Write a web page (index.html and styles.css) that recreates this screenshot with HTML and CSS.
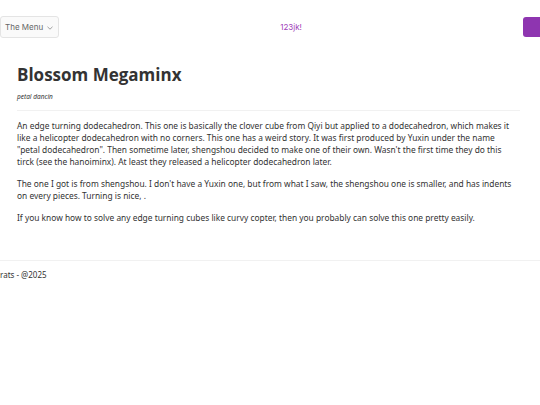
FILE: index.html
```html
<!DOCTYPE html>
<html>
<head>
<meta charset="utf-8">
<link rel="stylesheet" href="styles.css">
</head>
<body>
<header class="topbar">
  <button class="menu-btn">The Menu <svg class="chev" width="6" height="4" viewBox="0 0 6 4"><path d="M0.5 0.8 L3 3.2 L5.5 0.8" fill="none" stroke="#888" stroke-width="0.8"/></svg></button>
  <span class="brand">123jk!</span>
  <button class="action-btn"></button>
</header>
<main class="content">
  <h1 class="title">Blossom Megaminx</h1>
  <p class="subtitle">petal dancin</p>
  <div class="body">
    <p>An edge turning dodecahedron. This one is basically the clover cube from Qiyi but applied to a dodecahedron, which makes it like a helicopter dodecahedron with no corners. This one has a weird story. It was first produced by Yuxin under the name "petal&nbsp;dodecahedron". Then sometime later, shengshou decided to make one of their own. Wasn't the first time they do this tirck (see the hanoiminx). At least they released a helicopter dodecahedron later.</p>
    <p>The one I got is from shengshou. I don't have a Yuxin one, but from what I saw, the shengshou one is smaller, and has indents on every pieces. Turning is nice, .</p>
    <p>If you know how to solve any edge turning cubes like curvy copter, then you probably can solve this one pretty easily.</p>
  </div>
</main>
<footer class="footer">rats - @2025</footer>
</body>
</html>
```
FILE: styles.css
```css
html, body {
  margin: 0;
  padding: 0;
  background: #fff;
  overflow: hidden;
}
body {
  font-family: "Noto Sans", "Open Sans", sans-serif;
  color: #333;
}
.topbar {
  display: flex;
  align-items: center;
  justify-content: space-between;
  height: 22px;
  margin-top: 16px;
  margin-right: -6px;
}
.menu-btn {
  display: flex;
  align-items: center;
  gap: 4px;
  height: 22px;
  padding: 0 5px 0 4px;
  background: #fafafa;
  border: 1px solid #e4e4e4;
  border-radius: 3px;
  font-family: "Inter", sans-serif;
  font-size: 8px;
  color: #666;
}
.chev { margin-top: 1px; }
.brand {
  font-family: "Inter", sans-serif;
  font-size: 8px;
  color: #a040b8;
}
.action-btn {
  width: 23px;
  height: 20px;
  background: #8e35b0;
  border: none;
  border-radius: 3px;
}
.content {
  padding: 25px 20px 0 17px;
}
.title {
  margin: 0;
  font-family: "Open Sans", "Noto Sans", sans-serif;
  font-size: 17px;
  font-weight: 700;
  line-height: 24px;
  color: #333;
}
.subtitle {
  margin: 5px 0 0;
  font-size: 6.5px;
  font-style: italic;
  color: #333;
  padding-bottom: 9px;
  border-bottom: 1px solid #f1f1f1;
}
.body {
  padding-top: 9px;
}
.body p {
  margin: 0 0 10px;
  font-size: 8.4px;
  line-height: 12px;
  color: #333;
}
.footer {
  margin-top: 36px;
  border-top: 1px solid #f1f1f1;
  padding-top: 8px;
  font-size: 8px;
  color: #333;
}
```
